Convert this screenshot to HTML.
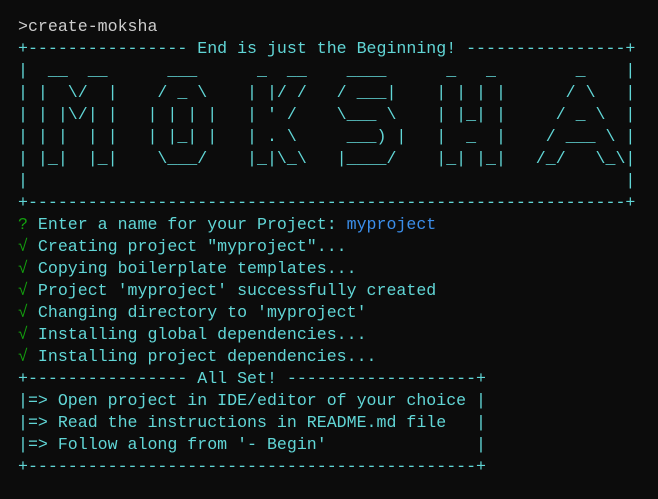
<!DOCTYPE html>
<html><head><meta charset="utf-8"><style>
html,body{margin:0;padding:0;background:#0c0c0c;width:658px;height:499px;overflow:hidden}
pre{margin:0;position:absolute;left:18px;top:16px;font-family:"Liberation Mono","DejaVu Sans Mono",monospace;font-size:16.6px;line-height:22px;color:#61d6d6;white-space:pre}
.w{color:#cccccc}.g{color:#13a10e}.b{color:#3b8eea}
</style></head><body><pre><span class="w">&gt;create-moksha</span>
+---------------- End is just the Beginning! ----------------+
|  __  __      ___      _  __    ____      _   _        _    |
| |  \/  |    / _ \    | |/ /   / ___|    | | | |      / \   |
| | |\/| |   | | | |   | ' /    \___ \    | |_| |     / _ \  |
| | |  | |   | |_| |   | . \     ___) |   |  _  |    / ___ \ |
| |_|  |_|    \___/    |_|\_\   |____/    |_| |_|   /_/   \_\|
|                                                            |
+------------------------------------------------------------+
<span class="g">?</span> Enter a name for your Project: <span class="b">myproject</span>
<span class="g">√</span> Creating project "myproject"...
<span class="g">√</span> Copying boilerplate templates...
<span class="g">√</span> Project 'myproject' successfully created
<span class="g">√</span> Changing directory to 'myproject'
<span class="g">√</span> Installing global dependencies...
<span class="g">√</span> Installing project dependencies...
+---------------- All Set! -------------------+
|=&gt; Open project in IDE/editor of your choice |
|=&gt; Read the instructions in README.md file   |
|=&gt; Follow along from '- Begin'               |
+---------------------------------------------+</pre></body></html>
